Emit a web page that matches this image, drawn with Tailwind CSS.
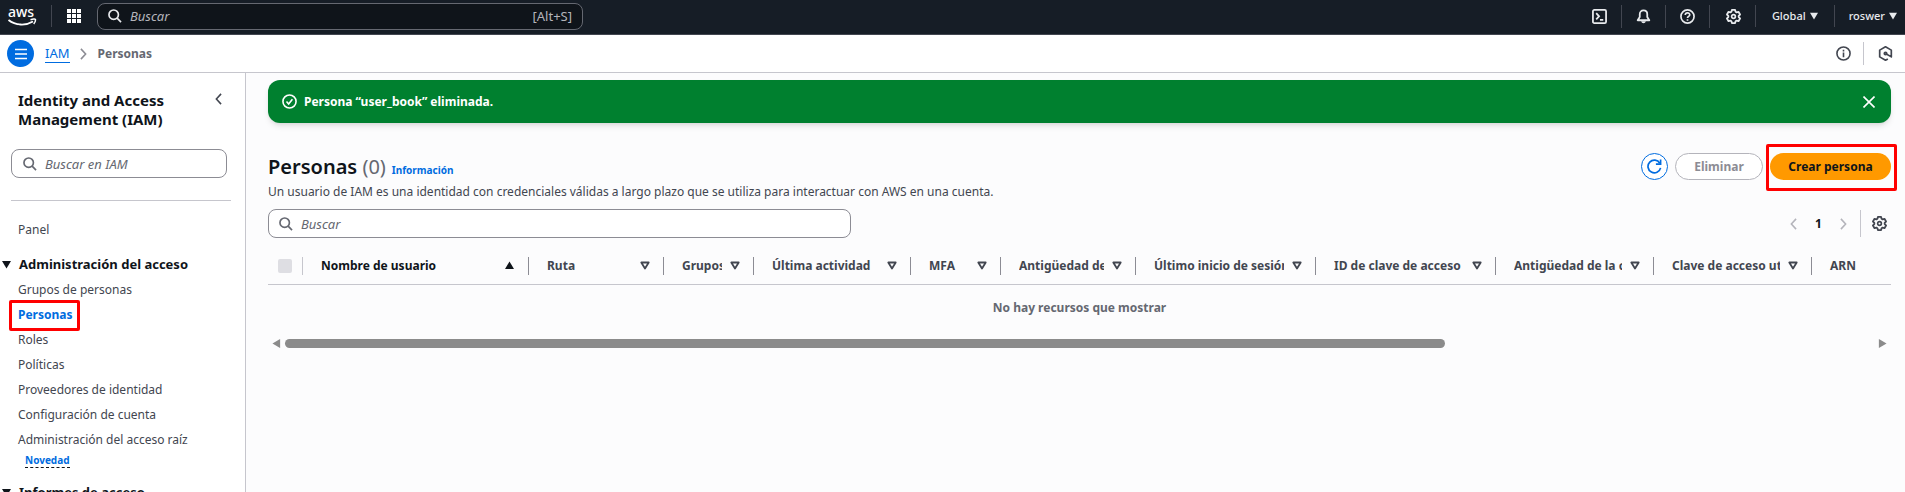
<!DOCTYPE html>
<html lang="es">
<head>
<meta charset="utf-8">
<title>Personas | IAM</title>
<script src="https://cdn.jsdelivr.net/npm/@tailwindcss/browser@4"></script>
</head>
<body class="flex h-screen flex-col overflow-hidden bg-white font-['Noto_Sans',sans-serif] text-xs leading-5 text-[#424650]">
<svg class="hidden" aria-hidden="true">
  <symbol id="gear" viewBox="0 0 16 16"><path d="M6.300 1h3.400l.5 2 1.100.6 2-.6 1.700 2.900L13.500 7.400v1.200l1.500 1.500-1.700 2.900-2-.6-1.100.6-.5 2H6.300l-.5-2-1.100-.6-2 .6L1 10.100l1.500-1.500V7.400L1 5.900 2.700 3l2 .6L5.800 3z" fill="none" stroke="currentColor" stroke-width="1.900" stroke-linejoin="round"/><circle cx="8" cy="8" r="2" fill="none" stroke="currentColor" stroke-width="1.800"/></symbol>
  <symbol id="search" viewBox="0 0 16 16"><circle cx="6.500" cy="6.500" r="5.400" fill="none" stroke="currentColor" stroke-width="1.900"/><path d="m10.400 10.400 4.500 4.500" fill="none" stroke="currentColor" stroke-width="1.900"/></symbol>
  <symbol id="sort" viewBox="0 0 10 10"><path d="M1.300 1.500h7.400L5 7.500z" fill="none" stroke="currentColor" stroke-width="1.800" stroke-linejoin="round"/></symbol>
  <symbol id="down" viewBox="0 0 10 10"><path d="M0 1h10L5 9.500z" fill="currentColor"/></symbol>
  <symbol id="left" viewBox="0 0 8 14"><path d="M7 1 1.500 7 7 13" fill="none" stroke="currentColor" stroke-width="1.800"/></symbol>
  <symbol id="right" viewBox="0 0 8 14"><path d="m1 1 5.500 6L1 13" fill="none" stroke="currentColor" stroke-width="1.800"/></symbol>
</svg>

<header class="flex h-[35px] shrink-0 items-center border-b border-[#424650] bg-[#161d26] pr-2 pb-0.5 pl-2 text-[#e8eaed]">
  <a href="#" aria-label="AWS" class="w-[43px]"><svg class="h-[22px] w-[30px] overflow-visible" viewBox="0 0 30 22"><text x="0" y="12" font-size="14" font-weight="500" fill="#fff">aws</text><path d="M.500 15c7 5.500 17 6 24.500 1.500" fill="none" stroke="#fff" stroke-width="1.800"/><path d="M22.500 14.700c3-1 5.500-.8 5 .3-.1 1.500-.8 3-1.800 4" fill="none" stroke="#fff" stroke-width="1.500"/></svg></a>
  <div class="h-[22px] w-px bg-[#424650]"></div>
  <button aria-label="Servicios" class="ml-[15px]"><svg class="size-3.5" viewBox="0 0 14 14" fill="#fff"><path d="M0 0h4v4H0zM5 0h4v4H5zM10 0h4v4h-4zM0 5h4v4H0zM5 5h4v4H5zM10 5h4v4h-4zM0 10h4v4H0zM5 10h4v4H5zM10 10h4v4h-4z"/></svg></button>
  <label class="ml-4 flex h-[27px] w-[486px] items-center rounded-lg border border-[#656871] bg-[#0f141a] px-2.5 text-[13px]">
    <svg class="mr-2 size-3.5"><use href="#search"/></svg>
    <input aria-label="Buscar" placeholder="Buscar" class="min-w-0 flex-1 italic outline-none placeholder:text-[#b4b4bb]">
    <span class="text-[#b4b4bb]">[Alt+S]</span>
  </label>
  <nav class="ml-auto flex items-center text-[11px]">
    <button aria-label="CloudShell" class="pr-3.5"><svg class="size-[15px]" viewBox="0 0 16 16" fill="none" stroke="currentColor" stroke-width="1.900"><rect x="1" y="1" width="14" height="14" rx="1.500"/><path d="m4.500 4.500 3 3.300-3 3.200M8.500 11.500H12"/></svg></button>
    <button aria-label="Notificaciones" class="border-l border-[#424650] px-3.5 py-1"><svg class="size-[15px]" viewBox="0 0 16 16" fill="none" stroke="currentColor" stroke-width="1.900"><path d="M8 1.500c-2.500 0-4 1.800-4 4v3L1.800 12h12.400L12 8.500v-3c0-2.200-1.500-4-4-4z" stroke-linejoin="round"/><path d="M5.500 13h5c-.5 2.800-4.500 2.800-5 0z" fill="currentColor" stroke="none"/></svg></button>
    <button aria-label="Ayuda" class="border-l border-[#424650] px-3.5 py-1"><svg class="size-[15px]" viewBox="0 0 16 16" fill="none" stroke="currentColor" stroke-width="1.800"><circle cx="8" cy="8" r="7"/><path d="M5.600 6.500C5.700 3.300 10.400 3.500 10.400 6.200 10.400 8 8 7.800 8 9.600M8 10.800v1.700"/></svg></button>
    <button aria-label="Configuración" class="border-l border-[#424650] py-1 pr-3.5 pl-4"><svg class="size-[15px]"><use href="#gear"/></svg></button>
    <button class="flex items-center gap-1 border-l border-[#424650] py-px pr-4 pl-4 font-medium">Global <svg class="size-2"><use href="#down"/></svg></button>
    <button class="flex items-center gap-1 border-l border-[#424650] py-px pl-3.5 font-medium">roswer <svg class="size-2"><use href="#down"/></svg></button>
  </nav>
</header>

<div class="flex h-[38px] shrink-0 items-center border-b border-[#c6c6cd] pr-3 pl-[7px]">
  <button aria-label="Menú" class="grid size-[27px] place-items-center rounded-full bg-[#006ce0]"><svg class="size-3" viewBox="0 0 12 12" stroke="#fff" stroke-width="1.600"><path d="M0 1.500h12M0 6h12M0 10.500h12"/></svg></button>
  <nav aria-label="Ruta de navegación" class="ml-[11px] flex items-center">
    <a href="#" class="border-b border-[#006ce0] text-[13px] leading-[17px] text-[#006ce0]">IAM</a>
    <svg class="mr-[11px] ml-2.5 h-3 w-[7px] text-[#8c8c94]"><use href="#right"/></svg>
    <span class="font-bold text-[#656871]">Personas</span>
  </nav>
  <div class="ml-auto flex items-center">
    <button aria-label="Información" class="pr-3"><svg class="size-[15px]" viewBox="0 0 16 16" fill="none" stroke="currentColor" stroke-width="1.700"><circle cx="8" cy="8" r="7"/><path d="M8 7v5M8 4v1.800"/></svg></button>
    <button aria-label="Recursos" class="border-l border-[#c6c6cd] py-1 pl-3.5"><svg class="size-[15px]" viewBox="0 0 16 16" fill="none" stroke="currentColor" stroke-width="1.800" stroke-linejoin="round"><path d="M10.500 13.800 8 15.200 1.800 11.600V4.400L8 .9l6.200 3.500v7.200L8 8"/><circle cx="8" cy="8" r="1.300"/></svg></button>
  </div>
</div>

<div class="flex min-h-0 flex-1">
  <aside class="w-[246px] shrink-0 overflow-hidden border-r border-[#c6c6cd] pt-[18px] pr-3.5 pl-[11px]">
    <div class="flex items-start justify-between pr-[9px] pl-[7px]">
      <h2 class="w-44 text-[15px] leading-[19px] font-bold text-[#0f141a]">Identity and Access Management (IAM)</h2>
      <button aria-label="Cerrar" class="pt-0.5"><svg class="h-3 w-[7px]"><use href="#left"/></svg></button>
    </div>
    <label class="mt-5 mr-1 flex h-[29px] items-center rounded-lg border border-[#8c8c94] px-[11px] text-[13px]">
      <svg class="mr-2 size-3.5 text-[#656871]"><use href="#search"/></svg>
      <input aria-label="Buscar en IAM" placeholder="Buscar en IAM" class="min-w-0 flex-1 italic outline-none placeholder:text-[#656871]">
    </label>
    <hr class="mt-[22px] border-[#c6c6cd]">
    <nav class="pt-[19px] pl-[7px]">
      <a href="#" class="block">Panel</a>
      <button class="mt-3.5 -ml-4 flex items-center gap-2 text-[13px] font-bold text-[#0f141a]"><svg class="size-[9px]"><use href="#down"/></svg>Administración del acceso</button>
      <ul class="flex flex-col gap-[5px] pt-1.5">
        <li><a href="#">Grupos de personas</a></li>
        <li class="relative"><a href="#" class="font-bold text-[#006ce0]">Personas</a><span class="absolute -top-[5px] -left-[9px] h-[31px] w-[71px] rounded-xs border-3 border-[#ff0000]"></span></li>
        <li><a href="#">Roles</a></li>
        <li><a href="#">Políticas</a></li>
        <li><a href="#">Proveedores de identidad</a></li>
        <li><a href="#">Configuración de cuenta</a></li>
        <li><a href="#" class="block">Administración del acceso raíz</a><a href="#" class="ml-[7px] inline-block border-b border-dashed border-[#0f141a] text-[10px] leading-[14px] font-bold text-[#006ce0]">Novedad</a></li>
      </ul>
      <button class="mt-3 -ml-4 flex items-center gap-2 text-[13px] font-bold text-[#0f141a]"><svg class="size-[9px]"><use href="#down"/></svg>Informes de acceso</button>
    </nav>
  </aside>

  <main class="min-w-0 flex-1 bg-[#fcfcfd] pt-[7px] pr-3.5 pl-[22px]">
    <div role="status" class="flex h-[43px] items-center rounded-xl bg-[#00802f] px-3.5 font-bold text-white shadow-md">
      <svg class="mr-[7px] size-[15px]" viewBox="0 0 16 16" fill="none" stroke="currentColor" stroke-width="1.700"><circle cx="8" cy="8" r="7"/><path d="m4.800 8 2.300 2.600 4-5"/></svg>
      Persona “user_book” eliminada.
      <button aria-label="Descartar" class="mr-0.5 ml-auto"><svg class="size-3" viewBox="0 0 12 12" stroke="currentColor" stroke-width="1.600"><path d="m.5.5 11 11M11.500.5l-11 11"/></svg></button>
    </div>

    <div class="mt-[30px] flex items-start">
      <div>
        <div class="flex items-baseline">
          <h1 class="text-xl leading-7 font-semibold text-[#0f141a]">Personas <span class="font-normal text-[#656871]">(0)</span></h1>
          <a href="#" class="ml-1.5 text-[10px] font-bold text-[#006ce0]">Información</a>
        </div>
        <p class="mt-px">Un usuario de IAM es una identidad con credenciales válidas a largo plazo que se utiliza para interactuar con AWS en una cuenta.</p>
      </div>
      <div class="ml-auto flex gap-[7px] font-bold">
        <button aria-label="Actualizar" class="grid size-[27px] place-items-center rounded-full border border-[#006ce0] bg-white text-[#006ce0]"><svg class="size-[15px]" viewBox="0 0 16 16" fill="none" stroke="currentColor" stroke-width="1.800"><path d="M14.500 9.500A6.800 6.800 0 1 1 13.700 4.500"/><path d="M14.500.5v5H9.500"/></svg></button>
        <button disabled class="h-[27px] w-[88px] rounded-full border border-[#b4b4bb] bg-white text-[#8c8c94]">Eliminar</button>
        <div class="relative"><button class="h-[27px] w-[121px] rounded-full bg-[#ff9900] text-[#0f141a]">Crear persona</button><span class="pointer-events-none absolute -top-[9px] -right-1.5 h-[47px] w-[131px] rounded-xs border-3 border-[#ff0000]"></span></div>
      </div>
    </div>

    <div class="mt-[7px] flex items-center justify-between">
      <label class="flex h-[29px] w-[583px] items-center rounded-lg border border-[#8c8c94] bg-white px-2.5 text-[13px]">
        <svg class="mr-2 size-3.5 text-[#656871]"><use href="#search"/></svg>
        <input aria-label="Buscar personas" placeholder="Buscar" class="min-w-0 flex-1 italic outline-none placeholder:text-[#656871]">
      </label>
      <div class="flex items-center pr-1">
        <button aria-label="Anterior"><svg class="h-3 w-[7px] text-[#b4b4bb]"><use href="#left"/></svg></button>
        <button class="w-[43px] font-bold text-[#0f141a]">1</button>
        <button aria-label="Siguiente"><svg class="h-3 w-[7px] text-[#b4b4bb]"><use href="#right"/></svg></button>
        <button aria-label="Preferencias" class="ml-[13px] border-l border-[#c6c6cd] py-1.5 pl-[11px]"><svg class="size-[15px]"><use href="#gear"/></svg></button>
      </div>
    </div>

    <table class="mt-2.5 w-full table-fixed text-left">
      <thead class="border-b border-[#c6c6cd]">
        <tr class="h-9">
          <th class="w-[35px] p-0"><div class="flex h-[18px] items-center border-r border-[#c6c6cd] pl-2.5"><input type="checkbox" disabled aria-label="Seleccionar todo" class="size-3.5 appearance-none rounded-xs bg-[#dedee3]"></div></th>
          <th class="w-[226px] p-0"><div class="flex h-[18px] items-center gap-2 border-r border-[#8c8c94] pr-3.5 pl-[18px] text-[#0f141a]"><span class="flex-1 overflow-hidden whitespace-nowrap">Nombre de usuario</span><svg class="size-[9px] shrink-0 rotate-180"><use href="#down"/></svg></div></th>
          <th class="w-[135px] p-0"><div class="flex h-[18px] items-center gap-2 border-r border-[#8c8c94] pr-[13px] pl-[18px]"><span class="flex-1 overflow-hidden whitespace-nowrap">Ruta</span><svg class="size-2.5 shrink-0"><use href="#sort"/></svg></div></th>
          <th class="w-[90px] p-0"><div class="flex h-[18px] items-center gap-2 border-r border-[#8c8c94] pr-[13px] pl-[18px]"><span class="flex-1 overflow-hidden whitespace-nowrap">Grupos</span><svg class="size-2.5 shrink-0"><use href="#sort"/></svg></div></th>
          <th class="w-[157px] p-0"><div class="flex h-[18px] items-center gap-2 border-r border-[#8c8c94] pr-[13px] pl-[18px]"><span class="flex-1 overflow-hidden whitespace-nowrap">Última actividad</span><svg class="size-2.5 shrink-0"><use href="#sort"/></svg></div></th>
          <th class="w-[90px] p-0"><div class="flex h-[18px] items-center gap-2 border-r border-[#8c8c94] pr-[13px] pl-[18px]"><span class="flex-1 overflow-hidden whitespace-nowrap">MFA</span><svg class="size-2.5 shrink-0"><use href="#sort"/></svg></div></th>
          <th class="w-[135px] p-0"><div class="flex h-[18px] items-center gap-2 border-r border-[#8c8c94] pr-[13px] pl-[18px]"><span class="flex-1 overflow-hidden whitespace-nowrap">Antigüedad de la</span><svg class="size-2.5 shrink-0"><use href="#sort"/></svg></div></th>
          <th class="w-[180px] p-0"><div class="flex h-[18px] items-center gap-2 border-r border-[#8c8c94] pr-[13px] pl-[18px]"><span class="flex-1 overflow-hidden whitespace-nowrap">Último inicio de sesión</span><svg class="size-2.5 shrink-0"><use href="#sort"/></svg></div></th>
          <th class="w-[180px] p-0"><div class="flex h-[18px] items-center gap-2 border-r border-[#8c8c94] pr-[13px] pl-[18px]"><span class="flex-1 overflow-hidden whitespace-nowrap">ID de clave de acceso</span><svg class="size-2.5 shrink-0"><use href="#sort"/></svg></div></th>
          <th class="w-[158px] p-0"><div class="flex h-[18px] items-center gap-2 border-r border-[#8c8c94] pr-[13px] pl-[18px]"><span class="flex-1 overflow-hidden whitespace-nowrap">Antigüedad de la clave</span><svg class="size-2.5 shrink-0"><use href="#sort"/></svg></div></th>
          <th class="w-[158px] p-0"><div class="flex h-[18px] items-center gap-2 border-r border-[#8c8c94] pr-[13px] pl-[18px]"><span class="flex-1 overflow-hidden whitespace-nowrap">Clave de acceso utilizada</span><svg class="size-2.5 shrink-0"><use href="#sort"/></svg></div></th>
          <th class="p-0 pl-[18px]">ARN</th>
        </tr>
      </thead>
      <tbody>
        <tr><td colspan="12" class="h-12 p-0 text-center font-bold text-[#656871]">No hay recursos que mostrar</td></tr>
      </tbody>
    </table>

    <div class="mt-[7px] flex items-center gap-1 px-1 text-[#8b8b8b]">
      <svg class="size-[9px] rotate-90"><use href="#down"/></svg>
      <div class="flex-1"><div class="h-[9px] w-[73%] rounded-full bg-[#8b8b8b]"></div></div>
      <svg class="size-[9px] -rotate-90"><use href="#down"/></svg>
    </div>
  </main>
</div>
</body>
</html>
